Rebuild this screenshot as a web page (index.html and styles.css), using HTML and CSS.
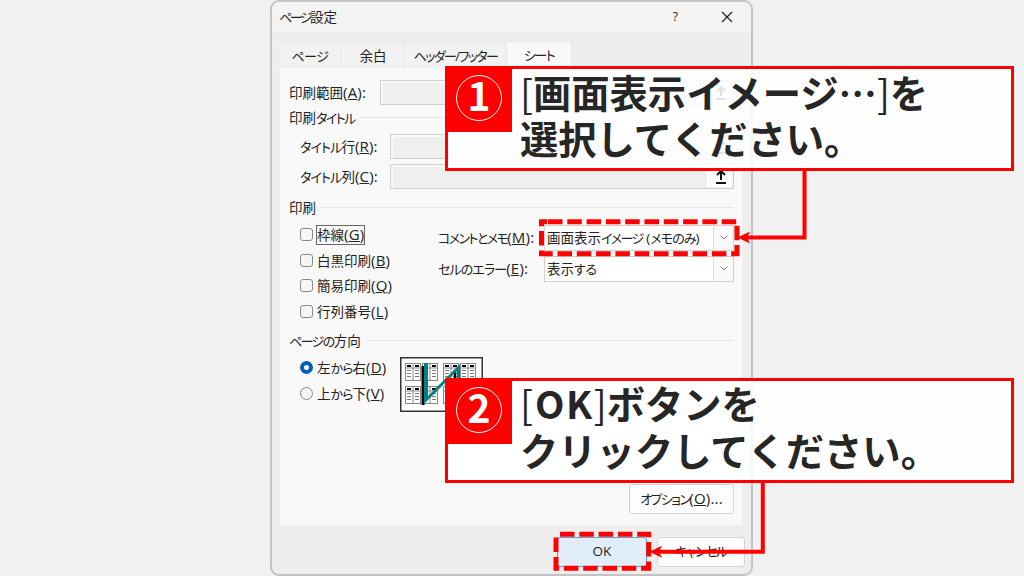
FILE: index.html
```html
<!DOCTYPE html>
<html lang="ja">
<head>
  <meta charset="UTF-8" />
  <meta name="viewport" content="width=device-width, initial-scale=1.0" />
  <title>ページ設定</title>
  <link rel="stylesheet" href="styles.css">
</head>
<body>
  <div class="dialog">
    <div class="titlebar">
      <span class="title"><span class="kana">ページ</span>設定</span>
      <span class="help">?</span>
      <svg class="close" width="12" height="12" viewBox="0 0 12 12"><path d="M1 1L11 11M11 1L1 11" /></svg>
    </div>

    <div class="tabs">
      <div class="tab tab-page"><span class="kana wide">ページ</span></div>
      <div class="tab tab-margin">余白</div>
      <div class="tab tab-header"><span class="kana">ヘッダー/フッター</span></div>
      <div class="tab tab-sheet active"><span class="kana">シート</span></div>
    </div>

    <div class="panel">
      <div class="field-row range-row">
        <label>印刷範囲<span class="key">(<u>A</u>):</span></label>
        <div class="ref-input"><span class="pick"><svg width="12" height="15" viewBox="0 0 12 15"><path d="M6 11V2M2 6L6 2L10 6M1 14H11" /></svg></span></div>
      </div>
      <div class="section"><span>印刷<span class="kana">タイトル</span></span></div>
      <div class="field-row title-row">
        <label><span class="kana mid">タイトル</span>行<span class="key">(<u>R</u>):</span></label>
        <div class="ref-input"><span class="pick"><svg width="12" height="15" viewBox="0 0 12 15"><path d="M6 11V2M2 6L6 2L10 6M1 14H11" /></svg></span></div>
      </div>
      <div class="field-row title-row">
        <label><span class="kana mid">タイトル</span>列<span class="key">(<u>C</u>):</span></label>
        <div class="ref-input"><span class="pick"><svg width="12" height="15" viewBox="0 0 12 15"><path d="M6 11V2M2 6L6 2L10 6M1 14H11" /></svg></span></div>
      </div>

      <div class="section section-print"><span>印刷</span></div>
      <div class="print">
        <div class="checks">
          <div class="check"><i class="box"></i><span class="focus">枠線<span class="key">(<u>G</u>)</span></span></div>
          <div class="check"><i class="box"></i><span>白黒印刷<span class="key">(<u>B</u>)</span></span></div>
          <div class="check"><i class="box"></i><span>簡易印刷<span class="key">(<u>Q</u>)</span></span></div>
          <div class="check"><i class="box"></i><span>行列番号<span class="key">(<u>L</u>)</span></span></div>
        </div>
        <div class="selects">
          <div class="select-row">
            <label><span class="kana">コメントとメモ</span><span class="key">(<u>M</u>):</span></label>
            <div class="select"><span>画面表示<span class="kana">イメージ</span> (<span class="kana mid">メモのみ</span>)</span><b><svg width="8" height="5" viewBox="0 0 8 5"><path d="M.5 .5L4 4L7.5 .5" /></svg></b></div>
          </div>
          <div class="select-row">
            <label><span class="kana mid">セルのエラー</span><span class="key">(<u>E</u>):</span></label>
            <div class="select"><span>表示<span class="kana wide">する</span></span><b><svg width="8" height="5" viewBox="0 0 8 5"><path d="M.5 .5L4 4L7.5 .5" /></svg></b></div>
          </div>
        </div>
      </div>

      <div class="section section-order"><span><span class="kana">ページの</span>方向</span></div>
      <div class="order">
        <div class="checks">
          <div class="check"><i class="radio on"></i><span>左<span class="kana mid">から</span>右<span class="key">(<u>D</u>)</span></span></div>
          <div class="check"><i class="radio"></i><span>上<span class="kana mid">から</span>下<span class="key">(<u>V</u>)</span></span></div>
        </div>
        <svg class="preview" width="83" height="55" viewBox="0 0 83 55">
          <defs>
            <g id="sheet">
              <rect x=".5" y=".5" width="15" height="17" fill="#fff" stroke="#888" />
              <path d="M8 0V18M0 5H16" stroke="#888" />
              <path d="M2 3H6M10 3H14" stroke="#000" stroke-width="2" />
              <path d="M2 7.5H6M10 7.5H14M2 10.5H6M10 10.5H14M2 13.5H6M10 13.5H14" stroke="#777" />
            </g>
          </defs>
          <rect x=".75" y=".75" width="81.5" height="53.5" fill="#fff" stroke="#333" stroke-width="1.5" />
          <use href="#sheet" x="5" y="6" /><use href="#sheet" x="22" y="6" />
          <use href="#sheet" x="43" y="6" /><use href="#sheet" x="60" y="6" />
          <use href="#sheet" x="5" y="29" /><use href="#sheet" x="22" y="29" />
          <use href="#sheet" x="43" y="29" /><use href="#sheet" x="60" y="29" />
          <path d="M23 9V48" stroke="#000" stroke-width="3" />
          <path d="M55 14V24" stroke="#000" stroke-width="2.5" />
          <path d="M24 6H28V39L60 7V24H57V14L24 47Z" fill="#008080" />
        </svg>
      </div>
      <div class="options"><div class="btn btn-options"><span class="kana">オプション</span><span class="key">(<u>O</u>)...</span></div></div>
    </div>

    <div class="footer">
      <div class="btn btn-ok">OK</div>
      <div class="btn btn-cancel"><span class="kana">キャンセル</span></div>
    </div>
  </div>

  <div class="callout callout-1">
    <div class="num"><span>1</span></div>
    <p><span class="thin">[</span>画面表示イメージ…<span class="thin">]</span>を<br>選択してください。</p>
  </div>
  <div class="callout callout-2">
    <div class="num"><span>2</span></div>
    <p><span class="thin">[</span><span class="latin">OK</span><span class="thin">]</span>ボタンを<br>クリックしてください。</p>
  </div>

  <!-- dashed highlights and arrows -->
  <svg class="marks" width="1024" height="576" viewBox="0 0 1024 576">
    <path class="dash" d="M548 221.7H737V253.7H541.5V221.7H547" />
    <path class="dash" d="M560 534.3H648.7V568.3H556V534.3" />
    <path class="line" d="M804.5 171V237.5H746" />
    <path class="head" d="M737.5 237.5L750 231.5L747 237.5L750 243.5Z" />
    <path class="line" d="M762.8 483V551.7H658" />
    <path class="head" d="M649.5 551.7L662 545.7L659 551.7L662 557.7Z" />
  </svg>
</body>
</html>
```
FILE: styles.css
```css
* {
  box-sizing: border-box;
}
body {
  margin: 0;
  width: 1024px;
  height: 576px;
  overflow: hidden;
  position: relative;
  background: #f1f1f1;
  color: #222;
  font-family: "Open Sans", "Noto Sans CJK JP", sans-serif;
  font-size: 13.5px;
  line-height: 20px;
  white-space: nowrap;
}
u {
  text-decoration-thickness: 1px;
  text-underline-offset: 1px;
}
.key {
  font-size: 15px;
  letter-spacing: 0.2px;
}
.kana {
  font-feature-settings: "palt";
  font-size: 13px;
  letter-spacing: -1.6px;
}
.kana.mid {
  letter-spacing: -0.9px;
}
.kana.wide {
  letter-spacing: -0.4px;
}
.dialog {
  width: 483px;
  height: 576px;
  margin-left: 270px;
  border: 2px solid #c3c3c3;
  border-radius: 9px;
  background: #eee;
  overflow: hidden;
}
.titlebar {
  display: flex;
  align-items: center;
  height: 30px;
  padding: 0 18px 0 7px;
  background: #f3f3f3;
}
.title {
  flex: 1;
}
.title .kana {
  letter-spacing: -2.5px;
}
.help {
  margin-right: 43px;
  font-size: 12px;
}
.close {
  fill: none;
  stroke: #222;
  stroke-width: 1.2;
}
.tabs {
  display: flex;
  align-items: flex-end;
  height: 36px;
  padding-left: 7px;
}
.tab {
  height: 25px;
  padding-top: 2px;
  text-align: center;
  background: #f2f2f2;
  border: 1px solid #e8e8e8;
  border-width: 1px 1px 0 0;
}
.tab-page { width: 63px; }
.tab-margin { width: 63px; }
.tab-header { width: 102px; }
.tab-sheet { width: 65px; }
.tab.active {
  height: 27px;
  padding-top: 3px;
  background: #f9f9f9;
}
.panel {
  height: 457px;
  margin: 0 9px 0 7px;
  padding: 12px 8px 0 9px;
  background: #f9f9f9;
  border-left: 1px solid #eaeaea;
}
.field-row {
  display: flex;
  align-items: center;
  height: 25px;
}
.range-row label { width: 91px; }
.title-row {
  margin-bottom: 5px;
  padding-left: 11px;
}
.title-row label { width: 90px; }
.ref-input {
  flex: 1;
  display: flex;
  justify-content: flex-end;
  height: 25px;
  padding: 1px;
  background: #efefef;
  border: 1px solid #cfcfcf;
  box-shadow: inset 2px 2px #f8f8f8;
}
.pick {
  display: flex;
  align-items: center;
  justify-content: center;
  width: 22px;
  background: #fdfdfd;
  box-shadow: -3px 0 #fff;
}
.pick svg {
  fill: none;
  stroke: #111;
  stroke-width: 2;
}
.section {
  display: flex;
  align-items: center;
  gap: 4px;
  height: 25px;
  margin-bottom: 4px;
}
.section::after {
  content: "";
  flex: 1;
  height: 1px;
  background: #e6e6e6;
}
.section-print {
  margin: 6px 0 2px;
}
.print {
  display: flex;
  height: 102px;
  padding-left: 11px;
}
.checks {
  width: 139px;
}
.check {
  display: flex;
  align-items: center;
  gap: 4px;
  height: 25.5px;
}
.box, .radio {
  width: 13px;
  height: 13px;
  border: 1px solid #8a8a8a;
  border-radius: 3px;
  background: #f6f6f6;
}
.radio {
  border-radius: 50%;
}
.radio.on {
  border: 4px solid #005fb8;
  background: #fff;
}
.focus {
  outline: 1px solid #666;
  line-height: 17px;
}
.select-row {
  display: flex;
  align-items: center;
  height: 31px;
}
.select-row label {
  width: 106px;
}
.select {
  display: flex;
  justify-content: space-between;
  width: 190px;
  height: 26px;
  padding-left: 2px;
  line-height: 24px;
  background: #fff;
  border: 1px solid #d0d0d0;
}
.select b {
  display: flex;
  align-items: center;
  justify-content: center;
  width: 20px;
  border-left: 1px solid #ddd;
  background: #fafafa;
}
.select svg {
  fill: none;
  stroke: #777;
}
.section-order {
  margin: 4px 0 2px;
}
.order {
  display: flex;
  height: 57px;
  padding-left: 11px;
}
.order .checks {
  width: 100px;
}
.preview {
  margin-top: 2px;
}
.options {
  display: flex;
  justify-content: flex-end;
  margin-top: 72px;
}
.btn {
  height: 30px;
  line-height: 27px;
  text-align: center;
  background: #fdfdfd;
  border: 1px solid #d5d5d5;
  border-radius: 3px;
}
.btn-options {
  width: 105px;
}
.footer {
  display: flex;
  justify-content: flex-end;
  gap: 10px;
  padding: 12px 6px 0 0;
}
.btn-ok {
  width: 90px;
  background: #e0eef9;
  border-color: #5b9fd8;
}
.btn-cancel {
  width: 88px;
}

/* callouts over the dialog */
.callout {
  position: absolute;
  left: 445px;
  width: 569px;
  height: 105px;
  display: flex;
  background: rgba(255, 255, 255, 0.88);
  border: 3px solid #f00;
}
.callout-1 { top: 66px; }
.callout-2 { top: 378px; }
.num {
  display: flex;
  align-items: center;
  justify-content: center;
  flex: none;
  width: 64px;
  height: 63px;
  background: #f00;
}
.num span {
  width: 46px;
  height: 46px;
  margin: -6px 2px 0 0;
  border: 1.5px solid #fff;
  border-radius: 50%;
  color: #fff;
  font: bold 39px/37px "Noto Sans CJK JP", sans-serif;
  text-align: center;
}
.callout p {
  margin: 0 0 0 8px;
  color: #262626;
  font: bold 38.3px/46px "Noto Sans CJK JP", sans-serif;
}
.callout-2 p {
  margin: -2px 0 0 8px;
  line-height: 47px;
}
.thin {
  font-weight: normal;
}
.latin {
  letter-spacing: 1.5px;
  margin-left: 2px;
}
.marks {
  position: absolute;
  left: 0;
  top: 0;
}
.dash {
  fill: none;
  stroke: #f00;
  stroke-width: 5;
  stroke-dasharray: 14.5 4.8;
}
.line {
  fill: none;
  stroke: #f00;
  stroke-width: 4;
}
.head {
  fill: #f00;
}
```
